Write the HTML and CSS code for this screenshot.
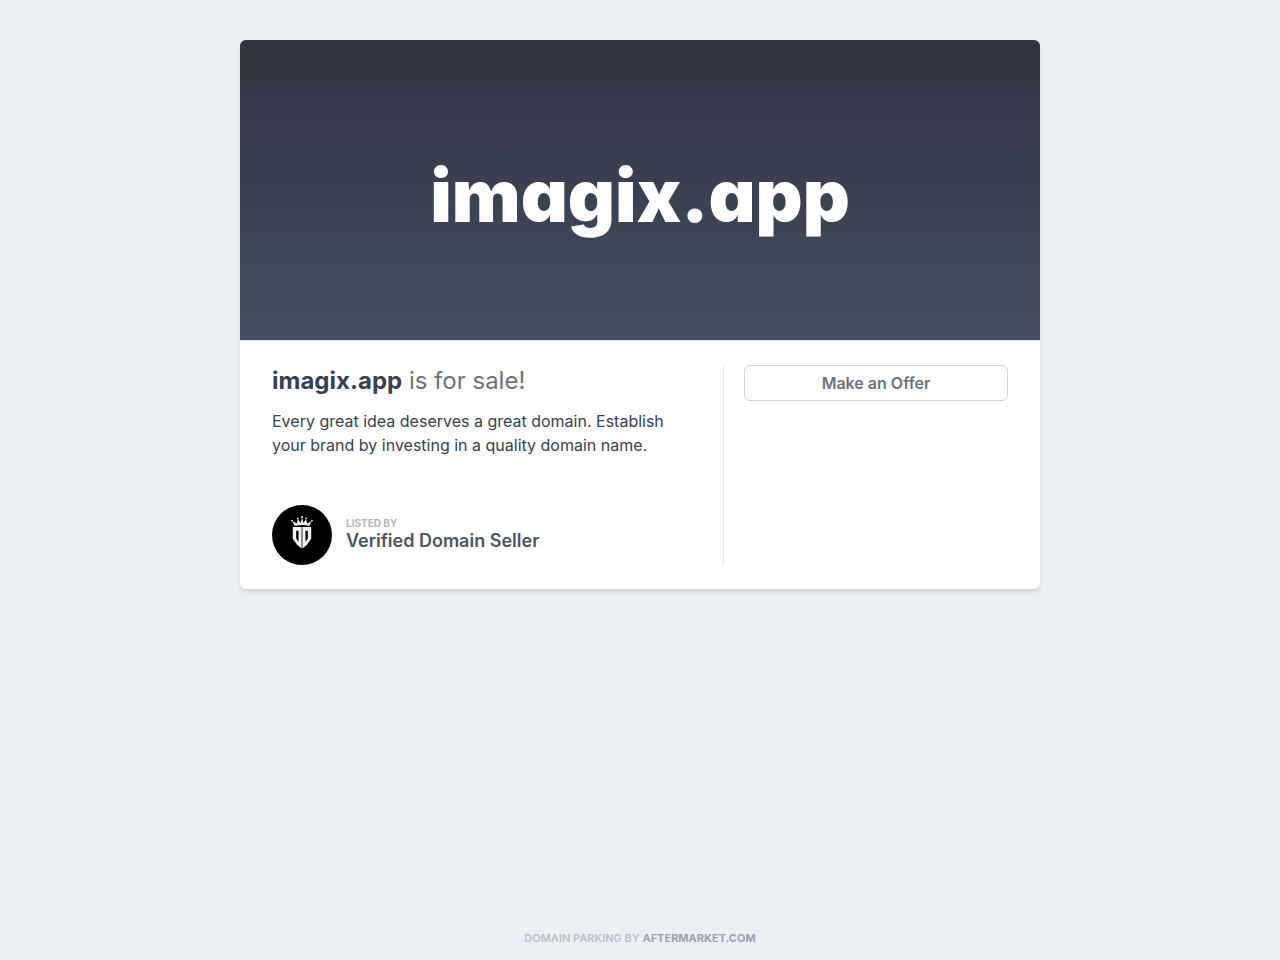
FILE: index.html
```html
<!DOCTYPE html>
<html lang="en">

<head>
    <meta charset="utf-8">
    <meta name="viewport" content="width=device-width, initial-scale=1.0">
    <title>imagix.app is for sale!</title>
    <link rel="stylesheet" href="styles.css">
</head>

<body>
    <main class="card">
        <div class="banner">
            <div class="banner-name">imagix.app</div>
        </div>

        <div class="content">
            <div class="info">
                <h1><strong>imagix.app</strong> is for sale!</h1>
                <p class="description">Every great idea deserves a great domain. Establish your brand by investing in a quality domain name.</p>

                <div class="seller">
                    <svg class="avatar" viewBox="0 0 60 60" aria-hidden="true">
                        <circle cx="30" cy="30" r="30" fill="#000"/>
                        <!-- crown -->
                        <g fill="#eee">
                            <path d="M22.8 21 20.2 16l4.600 2.400L26 14l2.600 4L30 12.500l1.400 5.500L34 14l1.200 4.400 4.600-2.400-2.600 5Q30 19.200 22.800 21z"/>
                            <circle cx="20" cy="15.600" r="0.900"/>
                            <circle cx="25.800" cy="13.400" r="0.900"/>
                            <circle cx="30" cy="12" r="1"/>
                            <circle cx="34.200" cy="13.400" r="0.900"/>
                            <circle cx="40" cy="15.600" r="0.900"/>
                        </g>
                        <!-- shield -->
                        <g fill="#f2f2f2" fill-rule="evenodd">
                            <path d="M20.800 22h8.800v21.500L25 39.800l-4.200-6zM24.200 25.800v7.600l2.300 3.400v-11z"/>
                            <path d="M39.200 22h-8.800v21.500l4.600-3.700 4.200-6zM35.800 25.800v7.600l-2.300 3.400v-11z"/>
                        </g>
                    </svg>
                    <div>
                        <div class="seller-label">Listed by</div>
                        <div class="seller-name">Verified Domain Seller</div>
                    </div>
                </div>
            </div>

            <div class="actions">
                <button type="button">Make an Offer</button>
            </div>
        </div>
    </main>

    <footer>Domain parking by <a href="#">Aftermarket.com</a></footer>
</body>

</html>
```
FILE: styles.css
```css
* {
    box-sizing: border-box;
}

body {
    display: flex;
    flex-direction: column;
    align-items: center;
    justify-content: space-between;
    min-height: 100vh;
    margin: 0;
    padding: 40px 16px 12px;
    background: #eceff4;
    color: #374151;
    font-family: Inter, "Liberation Sans", sans-serif;
}

.card {
    width: 100%;
    max-width: 800px;
    overflow: hidden;
    background: #fff;
    border-radius: 6px;
    box-shadow: 0 4px 6px -1px rgba(0, 0, 0, 0.1), 0 2px 4px -1px rgba(0, 0, 0, 0.06);
}

.banner {
    display: flex;
    align-items: center;
    justify-content: center;
    height: 300px;
    padding-top: 12px;
    background: linear-gradient(#323342, #434f60);
}

.banner-name {
    color: #fff;
    font-size: 73px;
    font-weight: 900;
    line-height: 96px;
    font-feature-settings: "cv11";
}

.content {
    display: flex;
    padding: 24px 32px;
    border-top: 1px solid #e5e7eb;
}

.info {
    flex: 1;
    padding-right: 32px;
}

h1 {
    margin: 0 0 12px;
    color: #6b7280;
    font-size: 24px;
    font-weight: 400;
    line-height: 32px;
}

h1 strong {
    color: #374151;
    font-weight: 700;
}

.description {
    margin: 0;
    font-size: 16px;
    line-height: 24px;
}

.seller {
    display: flex;
    align-items: center;
    gap: 14px;
    margin-top: 48px;
}

.avatar {
    width: 60px;
    height: 60px;
}

.seller-label {
    color: #b0b5be;
    font-size: 10px;
    font-weight: 700;
    line-height: 12px;
    text-transform: uppercase;
}

.seller-name {
    color: #4b5563;
    font-size: 18px;
    font-weight: 600;
    line-height: 24px;
}

.actions {
    width: 285px;
    padding-left: 20px;
    border-left: 1px solid #e5e7eb;
}

button {
    width: 100%;
    padding: 5px 16px;
    background: #fff;
    border: 1px solid #d1d5db;
    border-radius: 6px;
    color: #6b7280;
    font-family: inherit;
    font-size: 16px;
    font-weight: 600;
    line-height: 24px;
    cursor: pointer;
}

footer {
    color: #bcc0c7;
    font-size: 11px;
    font-weight: 600;
    line-height: 20px;
    text-transform: uppercase;
}

footer a {
    color: #9ca3af;
    font-weight: 700;
    text-decoration: none;
}
```
